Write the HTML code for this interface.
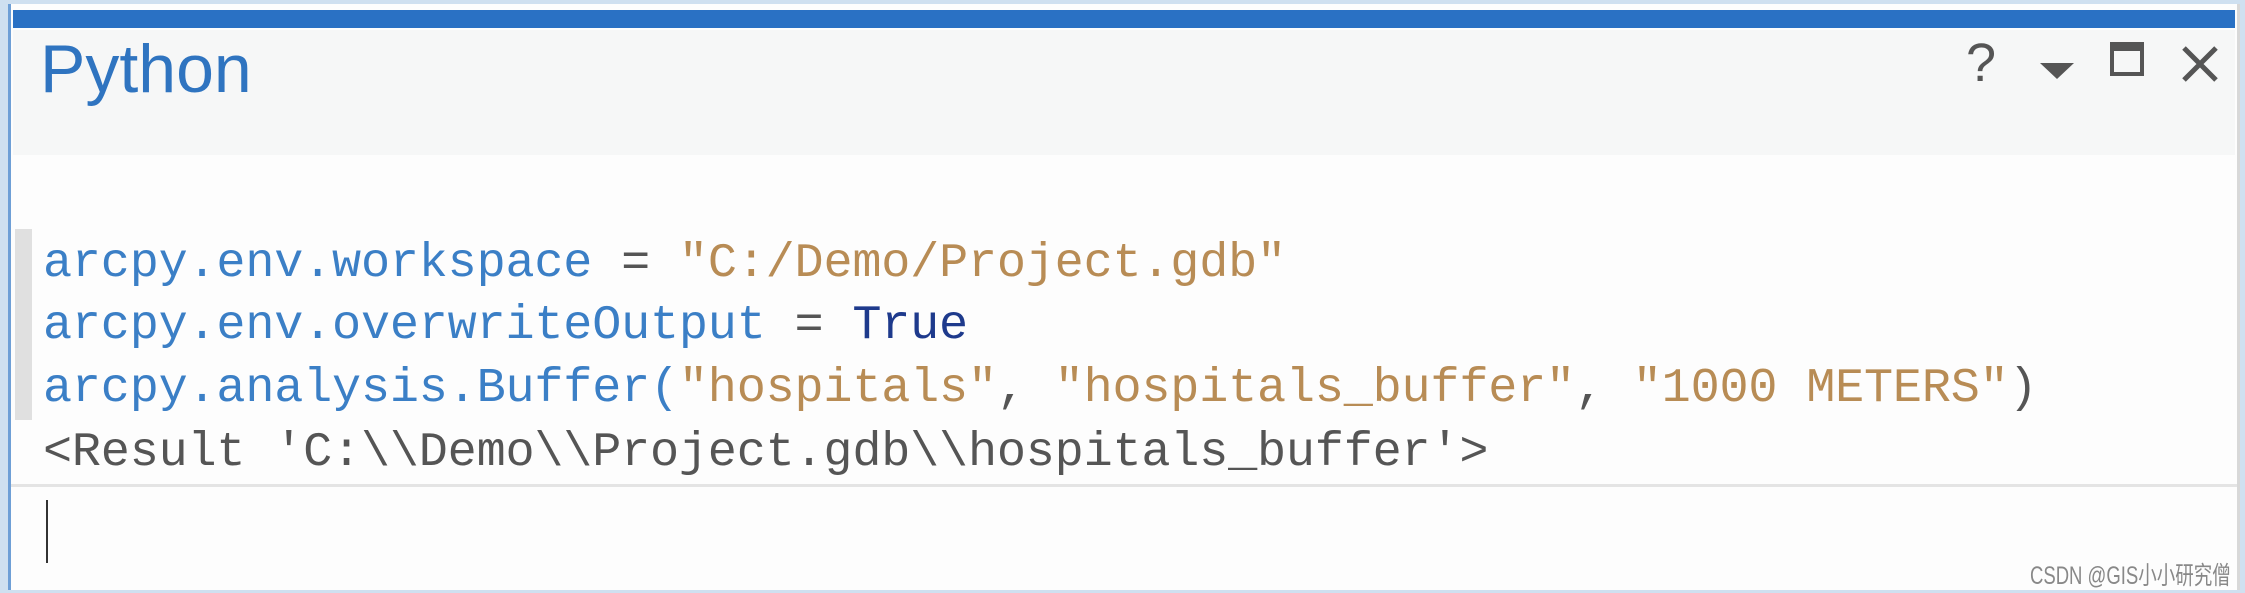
<!DOCTYPE html>
<html><head><meta charset="utf-8"><style>
html,body{margin:0;padding:0;width:2245px;height:593px;overflow:hidden;background:#fff;}
.abs{position:absolute;}
.code{position:absolute;left:43px;font-family:"Liberation Mono",monospace;font-size:48.5px;white-space:pre;letter-spacing:-0.2px;}
.i{color:#3b7fc6}.s{color:#b88c55}.k{color:#1e3a8c}.r{color:#555}
</style></head><body>
<div class="abs" style="left:0;top:0;width:2245px;height:593px;background:#cfe0f0;"></div>
<div class="abs" style="left:8px;top:4px;width:2232px;height:586px;background:#fdfdfd;border-left:3px solid #6e9fd6;border-right:3px solid #d8d8d8;box-sizing:border-box;"></div>
<div class="abs" style="left:13px;top:10px;width:2222px;height:18px;background:#2a71c4;"></div>
<div class="abs" style="left:13px;top:30px;width:2222px;height:125px;background:#f6f7f7;"></div>
<div class="abs" style="left:40px;top:30px;font-family:'Liberation Sans',sans-serif;font-size:68px;color:#2f74c0;">Python</div>
<div class="abs" style="left:1966px;top:32px;font-family:'Liberation Sans',sans-serif;font-size:54px;color:#555;">?</div>
<div class="abs" style="left:2040px;top:63px;width:0;height:0;border-left:17px solid transparent;border-right:17px solid transparent;border-top:16px solid #555;"></div>
<div class="abs" style="left:2110px;top:42px;width:34px;height:34px;border:4px solid #555;border-top-width:9px;box-sizing:border-box;"></div>
<svg class="abs" style="left:2180px;top:44px" width="40" height="40"><path d="M4 4L36 36M36 4L4 36" stroke="#555" stroke-width="5"/></svg>
<div class="abs" style="left:15px;top:229px;width:17px;height:191px;background:#e0e0e0;"></div>
<div class="code" style="top:236px"><span class="i">arcpy.env.workspace</span> <span class="r">=</span> <span class="s">"C:/Demo/Project.gdb"</span></div>
<div class="code" style="top:298px"><span class="i">arcpy.env.overwriteOutput</span> <span class="r">=</span> <span class="k">True</span></div>
<div class="code" style="top:361px"><span class="i">arcpy.analysis.Buffer(</span><span class="s">"hospitals"</span><span class="r">,</span> <span class="s">"hospitals_buffer"</span><span class="r">,</span> <span class="s">"1000 METERS"</span><span class="r">)</span></div>
<div class="code r" style="top:425px">&lt;Result 'C:\\Demo\\Project.gdb\\hospitals_buffer'&gt;</div>
<div class="abs" style="left:11px;top:484px;width:2226px;height:3px;background:#e4e4e4;"></div>
<div class="abs" style="left:46px;top:500px;width:2px;height:63px;background:#333;"></div>
<div class="abs" style="left:2030px;top:556px;white-space:nowrap;font-family:'Liberation Sans','Noto Sans CJK SC',sans-serif;font-size:25px;color:#888;transform:scaleX(0.74);transform-origin:left;">CSDN @GIS小小研究僧</div>
</body></html>
